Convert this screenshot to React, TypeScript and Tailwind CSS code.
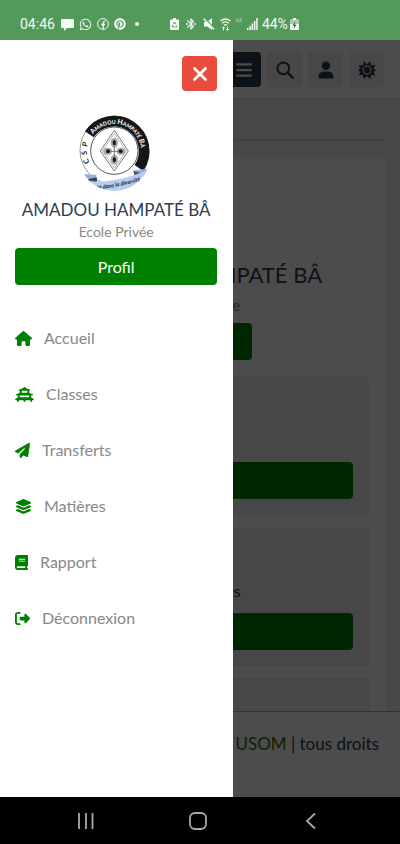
import { useState } from 'react';
import type { ReactNode } from 'react';
import {
  FaBars,
  FaBook,
  FaHouse,
  FaLayerGroup,
  FaPaperPlane,
  FaPinterest,
  FaRightFromBracket,
  FaVihara,
  FaWhatsapp,
  FaXmark,
} from 'react-icons/fa6';
import { MdBluetoothConnected } from 'react-icons/md';

const menu = [
  { label: 'Accueil', icon: FaHouse, width: 'w-[17px]' },
  { label: 'Classes', icon: FaVihara, width: 'w-[19px]' },
  { label: 'Transferts', icon: FaPaperPlane, width: 'w-[15px]' },
  { label: 'Matières', icon: FaLayerGroup, width: 'w-[17px]' },
  { label: 'Rapport', icon: FaBook, width: 'w-[13px]' },
  { label: 'Déconnexion', icon: FaRightFromBracket, width: 'w-[15px]' },
];

const SearchIcon = () => (
  <svg viewBox="0 0 18 18" className="h-[18px] w-[18px]" fill="none" stroke="currentColor" aria-hidden="true">
    <circle cx="7.300" cy="7.300" r="5.900" strokeWidth="2" />
    <path d="m11.700 11.700 5 5" strokeWidth="2.400" strokeLinecap="round" />
  </svg>
);

const UserIcon = () => (
  <svg viewBox="0 0 18 18" className="h-[18px] w-[18px]" fill="currentColor" aria-hidden="true">
    <circle cx="9" cy="4.700" r="4.300" />
    <path d="M1.500 17.500Q1 10.500 7 10.500h4q6 0 5.500 7Z" />
  </svg>
);

const SunIcon = () => (
  <svg viewBox="0 0 18 18" className="h-[18px] w-[18px]" aria-hidden="true">
    <path
      fill="currentColor"
      d="M5.700.2 9 2.900 12.300.2 13 4.300 17.300 4.100 15.600 7.500 18 9.300 15.600 11 17.300 14.200 13.100 14 12.300 17.900 9 15.300 5.700 17.900 4.900 14 .7 14.200 2.400 11 0 9.300 2.400 7.500.7 4.100 5 4.300Z"
    />
    <circle cx="9" cy="9.100" r="4" fill="currentColor" stroke="#eee" strokeWidth="1.100" />
  </svg>
);

const Logo = ({ size }: { size: string }) => (
  <svg viewBox="58 40 222 240" className={`h-20 ${size}`} role="img" aria-label="CSP Amadou Hampaté Bâ">
    <defs>
      <clipPath id="seal">
        <circle cx="164" cy="167" r="107" />
      </clipPath>
      <path id="arc" d="M100 104A80 80 0 0 1 232 194" />
      <path id="arcLeft" d="M90 189A82 82 0 0 1 92 112" />
      <path id="ribbonText" d="M112 269Q190 262 262 236" />
    </defs>
    <circle cx="164" cy="152" r="103" fill="#fff" stroke="#999" strokeWidth="3" />
    <path d="M89 104A89 89 0 0 1 238 205" fill="none" stroke="#161616" strokeWidth="32" />
    <circle cx="164" cy="153" r="71" fill="#fff" stroke="#555" strokeWidth="3" />
    <text fill="#fff" fontSize="16" fontWeight="700" className="font-['Lato',sans-serif]">
      <textPath href="#arc">
        <tspan fontSize="21">A</tspan>MADOU <tspan fontSize="21">H</tspan>AMPATÉ <tspan fontSize="21">B</tspan>Â
      </textPath>
    </text>
    <text fill="#222" fontSize="22" fontWeight="700" className="font-['Lato',sans-serif]">
      <textPath href="#arcLeft">{'C\u00a0\u00a0S\u00a0\u00a0P'}</textPath>
    </text>
    <g fill="none" stroke="#333" strokeWidth="2">
      <path d="M164 92 206 154 164 214 122 154Z" />
      <path d="M164 101 200 154 164 205 128 154Z" stroke="#999" />
    </g>
    <g fill="#aaa">
      <ellipse cx="164" cy="129" rx="11" ry="15" />
      <ellipse cx="164" cy="180" rx="11" ry="15" />
      <ellipse cx="144" cy="155" rx="13" ry="11" />
      <ellipse cx="184" cy="155" rx="13" ry="11" />
    </g>
    <path d="M164 140v30M149 155h30" stroke="#777" strokeWidth="3" />
    <g fill="#1c1c1c">
      <ellipse cx="164" cy="129" rx="5" ry="8" />
      <ellipse cx="164" cy="180" rx="5" ry="8" />
      <circle cx="145" cy="155" r="6" />
      <circle cx="183" cy="155" r="6" />
    </g>
    <g clipPath="url(#seal)">
      <path d="M58 222 110 226 112 246 76 256Z" fill="#8fb1e2" />
      <path d="M74 241 111 233 112 246Z" fill="#444" />
      <path d="M222 212 274 206 262 240 246 228Z" fill="#8fb1e2" />
      <path d="M221 213 250 222 244 230 224 226Z" fill="#555" />
      <path d="M84 246Q170 250 248 218L276 210 270 250Q200 280 84 282Z" fill="#b3cdf3" />
      <text fill="#18213a" fontSize="17" fontStyle="italic" fontWeight="700" className="font-['Lato',sans-serif]">
        <textPath href="#ribbonText">té dans la diversité</textPath>
      </text>
    </g>
  </svg>
);

const BatteryIcon = ({ children }: { children: ReactNode }) => (
  <svg viewBox="0 0 9 12" className="h-3 w-[9px]" aria-hidden="true">
    <path fill="#f3f9f3" d="M3 0h3v1.500h2q1 0 1 1V11q0 1-1 1H1q-1 0-1-1V2.500q0-1 1-1h2Z" />
    {children}
  </svg>
);

const StatusBar = () => (
  <div className="flex h-10 shrink-0 items-center bg-[#539959] pl-5 pt-2 font-['Roboto',sans-serif] text-sm text-[#f3f9f3]">
    <span>04:46</span>
    <div className="ml-1.5 flex items-center gap-[5px]">
      <svg viewBox="0 0 13 13" className="h-[13px] w-[13px]" aria-hidden="true">
        <path fill="currentColor" d="M1 1h11q1 0 1 1v7q0 1-1 1H6l-3 3v-3H1q-1 0-1-1V2q0-1 1-1Z" />
      </svg>
      <FaWhatsapp className="h-[13px] w-[13px]" />
      <svg viewBox="0 0 12 12" className="h-3 w-3" fill="none" stroke="currentColor" aria-hidden="true">
        <circle cx="6" cy="6" r="5.400" />
        <path d="M6.200 11V5q0-1.700 2-1.500M4.200 6.500h3.800" strokeWidth="1.400" />
      </svg>
      <FaPinterest className="h-3 w-3" />
      <span className="ml-1 h-1 w-1 rounded-full bg-current" />
    </div>
    <div className="ml-[31px] flex items-center gap-[5px]">
      <BatteryIcon>
        <path d="M4.500 4 7 9H2Z" fill="none" stroke="#539959" strokeDasharray="2.500 1" />
      </BatteryIcon>
      <MdBluetoothConnected className="h-[14px] w-[14px]" />
      <svg viewBox="0 0 12 12" className="h-3 w-3" aria-hidden="true">
        <path d="M1 4h3l5-4v12L4 8.500H1Z" fill="currentColor" />
        <path d="M1.500.2 12 10.700" stroke="#539959" strokeWidth="1.300" />
        <path d="M.6.8 11.300 11.500" stroke="currentColor" strokeWidth="1.300" />
      </svg>
      <svg viewBox="0 0 11 13" className="h-[13px] w-[11px]" fill="none" stroke="currentColor" aria-hidden="true">
        <path d="M.5 3q5-4 10 0M2.200 5.200q3.300-2.600 6.600 0M4 7.200q1.500-1.200 3 0" strokeWidth="1.400" />
        <path d="M3.500 12.500V9M2 10.300 3.500 8.800 5 10.300M7.500 8.500v3.700M6 11l1.500 1.500L9 11" />
      </svg>
      <svg viewBox="0 0 6 13" className="h-[13px] w-1.5" fill="none" stroke="#a9cdac" aria-hidden="true">
        <path d="M.5 4.500v-4l2 4v-4M4 4.500v-4h1.500v2H4l1.500 2" strokeWidth=".6" />
      </svg>
      <svg viewBox="0 0 11 12" className="h-3 w-[11px]" fill="currentColor" aria-hidden="true">
        <path d="M0 10h1.500v2H0ZM2.300 8h1.500v4H2.300ZM4.600 5.500h1.500V12H4.600ZM6.900 3h1.500v9H6.900ZM9.200 0h1.500v12H9.200Z" />
      </svg>
    </div>
    <span className="ml-1 mr-0.5">44%</span>
    <BatteryIcon>
      <path d="M0 2h9v4H0Z" fill="#a9cdac" />
      <path d="M5.500 3.500 2.500 7.500h2L3.500 11l3-4.300h-2Z" fill="#23512a" />
    </BatteryIcon>
  </div>
);

const IconButton = ({ label, children }: { label: string; children: ReactNode }) => (
  <button
    type="button"
    aria-label={label}
    className="flex h-[35px] w-[35px] items-center justify-center rounded bg-[#eee]"
  >
    {children}
  </button>
);

const Stat = ({ label }: { label: string }) => (
  <div className="flex h-[139px] shrink-0 flex-col justify-end rounded bg-[#eee] p-4">
    <p className="mb-2.5 text-center text-base leading-6">{label}</p>
    <button type="button" aria-label={`Voir ${label}`} className="h-[37px] rounded bg-[#008000]" />
  </div>
);

const Dashboard = ({ onMenu }: { onMenu: () => void }) => (
  <div className="flex h-full flex-col bg-[#eee]">
    <header className="flex shrink-0 justify-end gap-1.5 border-b border-[#ddd] bg-white pb-[11px] pl-4 pr-4 pt-3">
      <button
        type="button"
        aria-label="Menu"
        onClick={onMenu}
        className="flex h-[35px] w-[35px] items-center justify-center rounded bg-[#2c3e50] text-lg text-white"
      >
        <FaBars />
      </button>
      <IconButton label="Rechercher"><SearchIcon /></IconButton>
      <IconButton label="Compte"><UserIcon /></IconButton>
      <IconButton label="Thème"><SunIcon /></IconButton>
    </header>
    <main className="flex min-h-0 flex-1 flex-col overflow-hidden px-[15px]">
      <div className="mt-2.5 h-8 shrink-0 border-b-2 border-[#ddd]" />
      <section className="mt-4 flex shrink-0 flex-col gap-3 rounded bg-white p-4">
        <div className="mb-1 flex flex-col items-center">
          <Logo size="w-[66px]" />
          <h2 className="mt-1.5 text-[22px] leading-8">AMADOU HAMPATÉ BÂ</h2>
          <p className="text-[15px] leading-7 text-[#888]">Ecole Privée</p>
          <button type="button" aria-label="Profil" className="mt-1 h-[37px] w-[103px] rounded bg-[#008000]" />
        </div>
        <Stat label="Matières" />
        <Stat label="Professeurs" />
        <Stat label="Classes" />
      </section>
    </main>
    <footer className="flex h-[86px] shrink-0 justify-end border-t border-[#aaa] bg-white px-[21px] pt-5 text-[17px] leading-6">
      <p className="whitespace-nowrap">
        <span className="text-[#3c7000]">USOM</span> | tous droits
      </p>
    </footer>
  </div>
);

const Drawer = ({ onClose }: { onClose: () => void }) => (
  <div className="absolute inset-0 bg-black/70">
    <aside className="flex h-full w-7/12 flex-col bg-white pl-[15px] pr-4 pt-4">
      <button
        type="button"
        aria-label="Fermer"
        onClick={onClose}
        className="flex h-[35px] w-[35px] items-center justify-center self-end rounded bg-[#e74c3c] text-[22px] text-white"
      >
        <FaXmark />
      </button>
      <div className="mt-[22px] flex flex-col items-center">
        <Logo size="w-[74px]" />
        <h2 className="mt-[5px] whitespace-nowrap text-[17px] leading-6">AMADOU HAMPATÉ BÂ</h2>
        <p className="text-sm leading-5 text-[#888]">Ecole Privée</p>
        <button type="button" className="mt-[6px] h-[37px] w-full rounded bg-[#008000] text-base text-white">
          Profil
        </button>
      </div>
      <nav className="mt-[25px]">
        {menu.map(({ label, icon: Icon, width }) => (
          <a key={label} href="#" className="flex h-14 items-center gap-3 text-base text-[#888]">
            <Icon className={`h-[15px] text-[#008000] ${width}`} />
            {label}
          </a>
        ))}
      </nav>
    </aside>
  </div>
);

const SystemNav = () => (
  <div className="flex h-[47px] shrink-0 items-center justify-around bg-black pl-[30px] pr-[33px] text-[#aaa]">
    <button type="button" aria-label="Applications récentes">
      <svg viewBox="0 0 18 18" className="h-[18px] w-[18px]" stroke="currentColor" strokeWidth="1.800">
        <path d="M2 1v16M9 1v16M15.500 1v16" />
      </svg>
    </button>
    <button type="button" aria-label="Écran d'accueil">
      <svg viewBox="0 0 18 18" className="h-[18px] w-[18px]" fill="none" stroke="currentColor" strokeWidth="1.800">
        <rect x="1" y="1" width="16" height="16" rx="5" />
      </svg>
    </button>
    <button type="button" aria-label="Retour">
      <svg viewBox="0 0 18 18" className="h-[18px] w-[18px]" fill="none" stroke="currentColor" strokeWidth="1.800">
        <path d="M13 1.500 5 9l8 7.500" />
      </svg>
    </button>
  </div>
);

export default function App() {
  const [open, setOpen] = useState(true);

  return (
    <div className="flex h-screen flex-col font-['Lato',sans-serif] text-[#2c3e50]">
      <StatusBar />
      <div className="relative min-h-0 flex-1 overflow-hidden">
        <Dashboard onMenu={() => setOpen(true)} />
        {open && <Drawer onClose={() => setOpen(false)} />}
      </div>
      <SystemNav />
    </div>
  );
}
